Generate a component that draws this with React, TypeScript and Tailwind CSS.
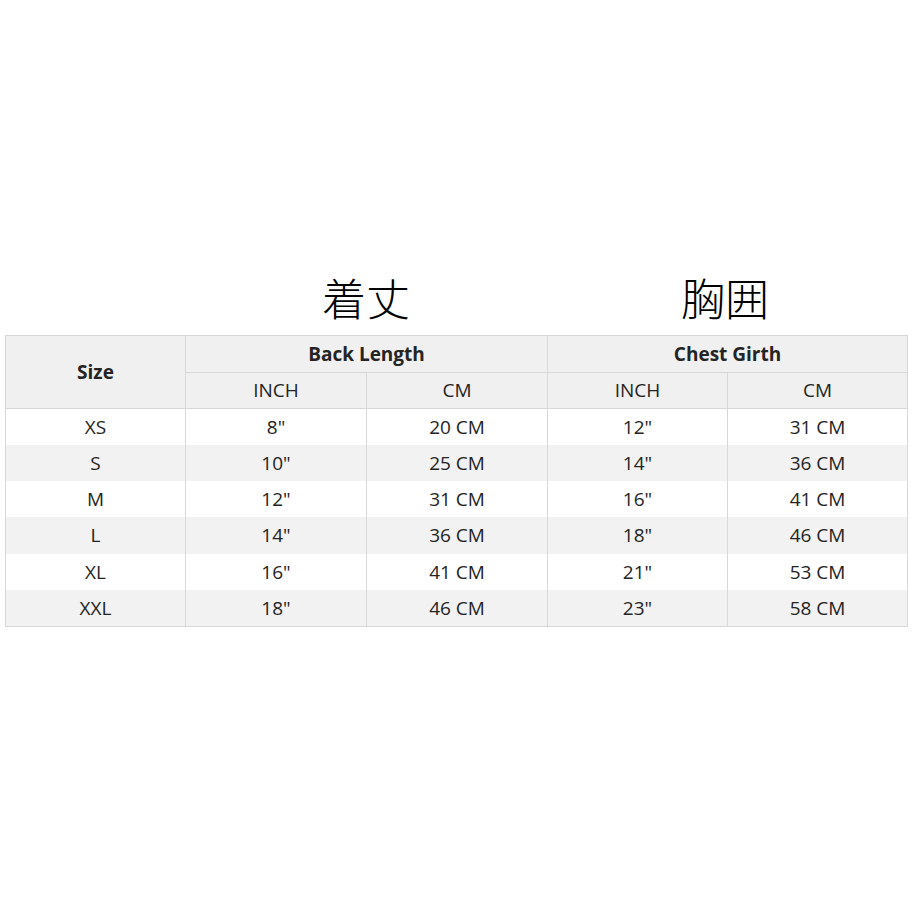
import React from 'react';

const rows = [
  { size: 'XS', backIn: '8"', backCm: '20 CM', chestIn: '12"', chestCm: '31 CM' },
  { size: 'S', backIn: '10"', backCm: '25 CM', chestIn: '14"', chestCm: '36 CM' },
  { size: 'M', backIn: '12"', backCm: '31 CM', chestIn: '16"', chestCm: '41 CM' },
  { size: 'L', backIn: '14"', backCm: '36 CM', chestIn: '18"', chestCm: '46 CM' },
  { size: 'XL', backIn: '16"', backCm: '41 CM', chestIn: '21"', chestCm: '53 CM' },
  { size: 'XXL', backIn: '18"', backCm: '46 CM', chestIn: '23"', chestCm: '58 CM' },
];

const cell = 'border border-[#d8d8d8] text-center align-middle p-0';

export default function App() {
  return (
    <div className="w-[920px] h-[920px] bg-white pt-[275px] text-[#242424] font-['Open_Sans','Noto_Sans',sans-serif]">
      {/* titles over the two measurement groups */}
      <div className="ml-[5px] w-[902px] grid grid-cols-[180px_362px_360px] mb-[16px]">
        <div />
        <div className="text-center text-[44px] leading-[44px] font-light text-black font-['Noto_Sans_CJK_JP',sans-serif]">
          着丈
        </div>
        <div className="text-center text-[44px] leading-[44px] font-light text-black pr-[4px] font-['Noto_Sans_CJK_JP',sans-serif]">
          胸囲
        </div>
      </div>

      <table className="ml-[5px] w-[902px] table-fixed border-collapse text-[19px]">
        <colgroup>
          <col className="w-[180px]" />
          <col className="w-[181px]" />
          <col className="w-[181px]" />
          <col className="w-[180px]" />
          <col className="w-[180px]" />
        </colgroup>
        <thead className="bg-[#f0f0f0]">
          <tr className="h-[37px]">
            <th rowSpan={2} className={`${cell} font-bold`}>Size</th>
            <th colSpan={2} className={`${cell} font-bold`}>Back Length</th>
            <th colSpan={2} className={`${cell} font-bold`}>Chest Girth</th>
          </tr>
          <tr className="h-[36px]">
            <th className={`${cell} font-medium`}>INCH</th>
            <th className={`${cell} font-medium`}>CM</th>
            <th className={`${cell} font-medium`}>INCH</th>
            <th className={`${cell} font-medium`}>CM</th>
          </tr>
        </thead>
        <tbody>
          {rows.map((r, i) => (
            <tr key={r.size} className={`h-[36.3px] ${i % 2 === 1 ? 'bg-[#f2f2f2]' : 'bg-white'}`}>
              <td className={`${cell} border-y-0`}>{r.size}</td>
              <td className={`${cell} border-y-0`}>{r.backIn}</td>
              <td className={`${cell} border-y-0`}>{r.backCm}</td>
              <td className={`${cell} border-y-0`}>{r.chestIn}</td>
              <td className={`${cell} border-y-0`}>{r.chestCm}</td>
            </tr>
          ))}
          <tr className="h-0">
            <td colSpan={5} className="border-t border-[#d8d8d8] p-0" />
          </tr>
        </tbody>
      </table>
    </div>
  );
}
